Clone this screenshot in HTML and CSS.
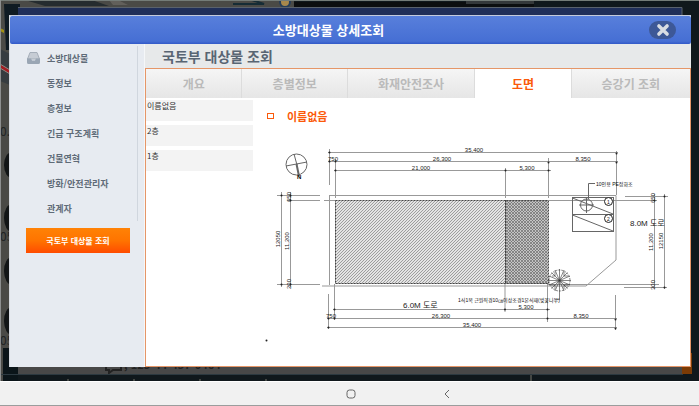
FILE: index.html
```
<!DOCTYPE html>
<html lang="ko">
<head>
    <meta charset="UTF-8">
    <meta name="viewport" content="width=device-width, initial-scale=1.0">
    <title>소방대상물 상세조회</title>
    <link rel="stylesheet" href="styles.css">
</head>
<body>

<div class="screen">
    <!-- dimmed map and the window under the dialog -->
    <svg class="backdrop" viewBox="0 0 699 381" preserveAspectRatio="none" aria-hidden="true">
        <rect width="699" height="381" fill="#10181c"/>
        <path d="M0 0H294V8H18V381H0z" fill="#4a4a46"/>
        <path d="M25 0H92L109 6H45z" fill="#252c2f"/>
        <path d="M109 0H118L128 5H113z" fill="#62605b"/>
        <path d="M233 4H264L252 0" fill="none" stroke="#162c35" stroke-width="2"/>
        <circle cx="285" cy="2" r="5" fill="#a8884c" stroke="#263d58" stroke-width="2"/>
        <path d="M294 2H534V8H294z" fill="#0c0e0f"/>
        <path d="M466 1H534V4H466z" fill="#34383a"/>
        <path d="M0 0H699V1H0z" fill="#747c78"/>
        <path d="M4 4H20V50H6z" fill="#0f1b23"/>
        <path d="M0 28L4 30V33L0 31z" fill="#a39212"/>
        <path d="M0 49L10 54V85L0 81z" fill="#363c40"/>
        <path d="M0 64L10 70V74L0 68z" fill="#a21d22" stroke="#8c8882"/>
        <g fill="#121516">
            <ellipse cx="12" cy="165" rx="8" ry="13"/>
            <ellipse cx="12" cy="218" rx="8" ry="14"/>
            <ellipse cx="12" cy="271" rx="8" ry="14"/>
            <ellipse cx="12" cy="321" rx="8" ry="14"/>
        </g>
        <g class="map-label">
            <text x="0" y="136">0.5</text>
            <text x="0" y="241">05</text>
            <text x="0" y="345">05</text>
        </g>
        <path d="M3 348H18V381H3z" fill="#0b1519"/>
        <path d="M18 7H682V15H18z" fill="#202f59"/>
        <path d="M18 7.5H682V15" fill="none" stroke="#5a626c"/>
        <path d="M18 366H682V374H18z" fill="#484848"/>
        <path d="M682 353H692V374H682z" fill="#7c3b05"/>
        <path d="M106 366V370H109V373L113 370H121V366" fill="none" stroke="#222" stroke-width="2"/>
        <text class="under-text" x="124" y="369">, 123-44-457-0464</text>
        <path d="M0 374.500H683" stroke="#2c3940"/>
        <path d="M68 379V381M134 379V381M200 379V381M266 379V381M531 375V381" stroke="#77746b"/>
        <path d="M0.500 0V381" stroke="#8d8f8f"/>
    </svg>

    <section class="dialog">
        <header class="dialog-header">
            <h1>소방대상물 상세조회</h1>
            <button class="close" type="button" aria-label="닫기">
                <svg viewBox="0 0 12 12"><path d="M2.500 2.500L9.500 9.500M9.500 2.500L2.500 9.500"/></svg>
            </button>
        </header>

        <div class="dialog-body">
            <nav class="sidebar">
                <ul class="menu">
                    <li><a href="#">
                        <svg class="tray" viewBox="0 0 13 12">
                            <path d="M3 .5H10L12.500 7H.5z" fill="#c6ccd4" stroke="#a5aeb9"/>
                            <path d="M0 6.500H4L5 8.500H8L9 6.500H13V10.500Q13 12 11.500 12H1.500Q0 12 0 10.500z" fill="#9aa6b4"/>
                        </svg>
                        소방대상물</a></li>
                    <li><a href="#">동정보</a></li>
                    <li><a href="#">층정보</a></li>
                    <li><a href="#">긴급 구조계획</a></li>
                    <li><a href="#">건물연혁</a></li>
                    <li><a href="#">방화/안전관리자</a></li>
                    <li><a href="#">관계자</a></li>
                </ul>
                <button class="primary" type="button">국토부 대상물 조회</button>
            </nav>

            <main class="content">
                <h2>국토부 대상물 조회</h2>
                <div class="panel">
                    <div class="tabs">
                        <button class="tab" type="button">개요</button>
                        <button class="tab tab-md" type="button">층별정보</button>
                        <button class="tab tab-lg" type="button">화재안전조사</button>
                        <button class="tab active" type="button">도면</button>
                        <button class="tab tab-last" type="button">승강기 조회</button>
                    </div>
                    <div class="drawing">
                        <ul class="floors">
                            <li><button type="button">이름없음</button></li>
                            <li><button type="button">2층</button></li>
                            <li><button type="button">1층</button></li>
                        </ul>
                        <div class="viewer">
                            <h3>이름없음</h3>
                            <svg class="plan" viewBox="253 130 437 236" role="img" aria-label="배치도">
                                <defs>
                                    <pattern id="hatch" width="3" height="3" patternUnits="userSpaceOnUse">
                                        <rect width="3" height="3" fill="#e4e4e4"/>
                                        <path d="M-1 1L1 -1M0 3L3 0M2 4L4 2" stroke="#8c8c8c" stroke-width=".8"/>
                                    </pattern>
                                    <pattern id="cross" width="3" height="3" patternUnits="userSpaceOnUse">
                                        <rect width="3" height="3" fill="#c4c4c4"/>
                                        <path d="M0 0L3 3M0 3L3 0" stroke="#6c6c6c" stroke-width=".7"/>
                                    </pattern>
                                </defs>

                                <!-- building -->
                                <rect x="335" y="200" width="170" height="84" fill="url(#hatch)"/>
                                <rect x="505" y="200" width="43" height="84" fill="url(#cross)"/>
                                <path class="wall" d="M335.500 200.500H548.500V283.500H335.500zM505.500 200V284"/>

                                <!-- site boundary -->
                                <path class="line" d="M329.500 195.500H616V260L586 286H322M329.500 195V285M324 200.500H335M548 200.500H657M548 284.500H659"/>

                                <!-- dimension lines -->
                                <g class="line">
                                    <path d="M328 152.500H618M328 161.500H618M334 170.500H551"/>
                                    <path d="M329.500 149V185M335.500 159V198M505.500 168V198M548.500 158V198M616.500 151V195"/>
                                    <path d="M333 309.500H550M327 318.500H617M327 327.500H617"/>
                                    <path d="M328.500 294V329M334.500 284V320M505 284V312M547.500 284V322M615.500 295V330"/>
                                    <path d="M277 195.500H320M287 200.500H320M281.500 192V287M290.500 192V287M277 284.500H320"/>
                                    <path d="M625 196.500H668M654.500 194V289M664.500 194V289M624 287.500H667"/>
                                </g>
                                <path class="ticks" d="M329.500 152.500h0M616.500 153.500h0M329.500 161.500h0M335.500 161.500h0M548.500 162.500h0M616.500 162.500h0M335.500 170.500h0M505.500 170.500h0M548.500 170.500h0M505 309.500h0M547.500 309.500h0M334.500 309.500h0M328.500 318.500h0M334.500 318.500h0M547.500 318.500h0M615.500 319.500h0M328.500 327.500h0M615.500 328.500h0M281.500 195.500h0M290.500 195.500h0M290.500 200.500h0M281.500 284.500h0M290.500 284.500h0M654.500 200.500h0M664.500 196.500h0M664.500 287.500h0M266.500 340.500h0"/>

                                <g class="dims">
                                    <text x="474" y="152">35,400</text>
                                    <text x="442" y="161">26,300</text>
                                    <text x="421" y="170">21,000</text>
                                    <text x="527" y="170">5,300</text>
                                    <text x="583" y="161">8,350</text>
                                    <text x="333" y="161">750</text>
                                    <text x="526" y="309">5,300</text>
                                    <text x="441" y="318">26,300</text>
                                    <text x="581" y="318">8,350</text>
                                    <text x="472" y="327">35,400</text>
                                    <text x="331" y="318">750</text>
                                    <text transform="translate(280 239) rotate(-90)">12050</text>
                                    <text transform="translate(289 241) rotate(-90)">11,200</text>
                                    <text transform="translate(291 197) rotate(-90)">650</text>
                                    <text transform="translate(291 284) rotate(-90)">200</text>
                                    <text transform="translate(653 242) rotate(-90)">11,200</text>
                                    <text transform="translate(663 241) rotate(-90)">12150</text>
                                    <text transform="translate(655 198) rotate(-90)">650</text>
                                    <text transform="translate(655 285) rotate(-90)">300</text>
                                </g>
                                <g class="roads">
                                    <text x="403" y="308">6.0M 도로</text>
                                    <text x="630" y="226">8.0M 도로</text>
                                </g>

                                <!-- north mark -->
                                <g class="thin">
                                    <circle cx="296.500" cy="164.500" r="10.500"/>
                                    <path d="M286 166L307 162M294 154L297 165"/>
                                    <path d="M296.500 164L299 176" stroke-width="2"/>
                                </g>
                                <text class="north" x="297" y="179">N</text>

                                <!-- septic tank -->
                                <g class="thin">
                                    <rect x="572.500" y="197.500" width="41" height="34"/>
                                    <path d="M572.500 214.500H613.500M572.500 198L613 214M572.500 215L613 231"/>
                                    <circle cx="586.500" cy="205" r="6"/>
                                    <path d="M579 205H594M586.500 198V213M588.500 199V183.500H595"/>
                                    <circle class="number" cx="608.500" cy="201.500" r="4"/>
                                    <circle class="number" cx="608.500" cy="218.500" r="4"/>
                                </g>
                                <g class="notes">
                                    <text x="607" y="204">1</text>
                                    <text x="607" y="221">2</text>
                                    <text x="596" y="186">10인용 PE정화조</text>
                                    <text x="458" y="302">1식1목 근원직경10㎝이상조경1본식재(벚꽃나무)</text>
                                </g>

                                <!-- tree -->
                                <g class="thin tree">
                                    <circle cx="559.500" cy="280.500" r="10.500" stroke-dasharray="2 1"/>
                                    <path d="M548 280.500H571M559.500 269V292M551.500 272.500L567.500 288.500M567.500 272.500L551.500 288.500M549 276L570 285M549 285L570 276M555 270L564 291M564 270L555 291"/>
                                    <path d="M555 276L552 276M555 276V272M564 276V272M564 276H568M555 285H551M555 285V289M564 285V289M564 285H568"/>
                                    <path d="M559.500 292V299.500H555"/>
                                </g>
                            </svg>
                        </div>
                    </div>
                </div>
            </main>
        </div>
    </section>
</div>

<footer class="system-bar">
    <button type="button" aria-label="홈">
        <svg viewBox="0 0 10 10"><rect x="1" y="1" width="8" height="8" rx="2.500"/></svg>
    </button>
    <button type="button" aria-label="뒤로">
        <svg viewBox="0 0 10 10"><path d="M7 1L3 5L7 9"/></svg>
    </button>
</footer>

</body>
</html>
```

FILE: styles.css
```
* {
    box-sizing: border-box;
}
body {
    margin: 0;
    min-height: 100vh;
    display: flex;
    flex-direction: column;
    background-color: #f1f1f1;
    font-family: "Noto Sans CJK KR", sans-serif;
    color: #4d5966;
}
h1, h2, h3, ul {
    margin: 0;
    padding: 0;
}
ul {
    list-style: none;
}
button {
    margin: 0;
    padding: 0;
    border: none;
    background: none;
    font-family: inherit;
    color: inherit;
    cursor: pointer;
}
svg {
    display: block;
}

.screen {
    position: relative;
    flex: 1;
    display: flex;
    padding: 15px 8px 14px 9px;
}
.backdrop {
    position: absolute;
    left: 0;
    top: 0;
    width: 100%;
    height: 100%;
}
.map-label {
    font-size: 12px;
    fill: #202324;
}
.under-text {
    font-size: 11px;
    font-weight: bold;
    fill: #222;
}

.dialog {
    position: relative;
    flex: 1;
    display: flex;
    flex-direction: column;
    min-width: 0;
    background-color: #e7e9ea;
    border-top: 1px solid #c4cbdc;
    border-left: 1px solid #d8dce2;
}
.dialog-header {
    position: relative;
    display: flex;
    align-items: center;
    justify-content: center;
    height: 28px;
    background: linear-gradient(#587fdb, #466fd4 90%, #3159c8);
    border-radius: 2px;
}
.dialog-header h1 {
    font-size: 13px;
    line-height: 20px;
    color: #fff;
    padding-right: 44px;
}
.close {
    position: absolute;
    right: 15px;
    top: 5px;
    display: flex;
    align-items: center;
    justify-content: center;
    width: 27px;
    height: 18px;
    border-radius: 9px;
    background-color: #3d5897;
}
.close svg {
    width: 14px;
    height: 14px;
    fill: none;
    stroke: #d9dde3;
    stroke-width: 3;
    stroke-linecap: round;
}
.dialog-body {
    flex: 1;
    display: flex;
}

.sidebar {
    width: 135px;
    padding: 2px 6px 0 7px;
    background-color: #e7ebf1;
    border-right: 1px solid #f5f7f9;
}
.menu {
    border-right: 1px solid #d0d6de;
}
.menu a {
    position: relative;
    display: block;
    padding-left: 30px;
    font-size: 9px;
    font-weight: bold;
    line-height: 25px;
    color: #5f6b78;
    text-decoration: none;
}
.tray {
    position: absolute;
    left: 10px;
    top: 6px;
    width: 13px;
    height: 12px;
}
.primary {
    display: block;
    width: 104px;
    height: 25px;
    margin: 7px 0 0 9px;
    background: linear-gradient(#ff8206, #ff7400 50%, #ff4c00);
    font-size: 8px;
    font-weight: bold;
    color: #fff;
}

.content {
    flex: 1;
    display: flex;
    flex-direction: column;
    min-width: 0;
}
.content h2 {
    padding-left: 17px;
    font-size: 14px;
    font-weight: bold;
    line-height: 24px;
    color: #596573;
}
.panel {
    flex: 1;
    display: flex;
    flex-direction: column;
    background-color: #fff;
    border: 1px solid #e59668;
}
.tabs {
    display: flex;
}
.tab {
    flex: 96;
    height: 29px;
    background: linear-gradient(#f5f5f5, #e6e6e6);
    border-right: 1px solid #dcdcdc;
    font-size: 12px;
    font-weight: bold;
    color: #bababa;
}
.tab-md {
    flex-grow: 105;
}
.tab-lg {
    flex-grow: 127;
}
.tab-last {
    flex-grow: 119;
    border-right: none;
}
.tab.active {
    background: #fff;
    color: #fb5a0a;
}

.drawing {
    flex: 1;
    display: flex;
}
.floors {
    display: flex;
    flex-direction: column;
    gap: 4px;
    width: 107px;
    padding-top: 2px;
}
.floors button {
    display: flex;
    width: 100%;
    height: 21px;
    padding-left: 1px;
    background-color: #f3f3f3;
    font-size: 8px;
    line-height: 12px;
    color: #333;
}
.viewer {
    flex: 1;
    min-width: 0;
}
.viewer h3 {
    display: flex;
    align-items: center;
    gap: 13px;
    height: 32px;
    padding: 4px 0 0 14px;
    font-size: 11px;
    color: #fb5a0a;
}
.viewer h3::before {
    content: "";
    box-sizing: border-box;
    width: 7px;
    height: 6px;
    border: 1px solid #fb5a0a;
}

.plan {
    width: 100%;
    font-family: "Liberation Sans", "Noto Sans CJK KR", sans-serif;
}
.line {
    fill: none;
    stroke: #999;
    stroke-width: 1;
}
.wall {
    fill: none;
    stroke: #444;
    stroke-dasharray: 2 1;
}
.ticks {
    stroke: #222;
    stroke-width: 2;
    stroke-linecap: round;
}
.thin {
    fill: none;
    stroke: #666;
    stroke-width: 1;
}
.number {
    fill: #fff;
    stroke: #222;
}
.tree {
    stroke: #333;
    stroke-width: .6;
}
.dims {
    font-size: 6px;
    text-anchor: middle;
    fill: #222;
}
.roads {
    font-size: 8px;
    fill: #222;
}
.notes {
    font-size: 5px;
    fill: #111;
}
.north {
    font-size: 6px;
    font-weight: bold;
}

.system-bar {
    position: relative;
    display: flex;
    align-items: center;
    justify-content: center;
    gap: 86px;
    height: 25px;
    padding-left: 98px;
    border-top: 1px solid #fff;
    border-bottom: 1px solid #9b9d9d;
}
.system-bar svg {
    width: 10px;
    height: 10px;
    fill: none;
    stroke: #666;
    stroke-width: 1;
}
```
